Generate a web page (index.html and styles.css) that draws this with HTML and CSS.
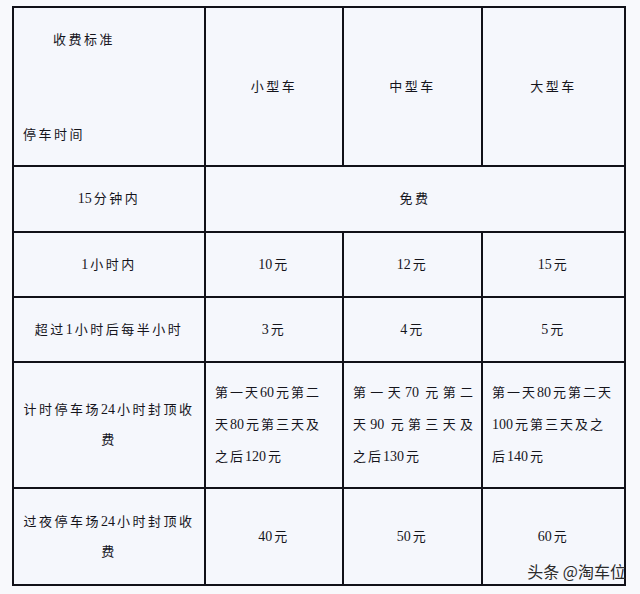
FILE: index.html
```html
<!DOCTYPE html>
<html lang="zh-CN">
<head>
<meta charset="utf-8">
<title>收费标准</title>
<link rel="stylesheet" href="styles.css">
</head>
<body>
<div class="page">
  <div class="grid">
    <div class="cell head-corner">
      <div class="hc-top">收费标准</div>
      <div class="hc-bottom">停车时间</div>
    </div>
    <div class="cell">小型车</div>
    <div class="cell">中型车</div>
    <div class="cell">大型车</div>

    <div class="cell"><span><span class="n">15</span>分钟内</span></div>
    <div class="cell span3">免费</div>

    <div class="cell"><span><span class="n">1</span>小时内</span></div>
    <div class="cell"><span><span class="n">10</span>元</span></div>
    <div class="cell"><span><span class="n">12</span>元</span></div>
    <div class="cell"><span><span class="n">15</span>元</span></div>

    <div class="cell"><span>超过<span class="n">1</span>小时后每半小时</span></div>
    <div class="cell"><span><span class="n">3</span>元</span></div>
    <div class="cell"><span><span class="n">4</span>元</span></div>
    <div class="cell"><span><span class="n">5</span>元</span></div>

    <div class="cell two-line"><div>计时停车场<span class="n">24</span>小时封顶收<br>费</div></div>
    <div class="cell multi">
      <div class="ln">第一天<span class="n">60</span>元第二</div>
      <div class="ln">天<span class="n">80</span>元第三天及</div>
      <div class="ln">之后<span class="n">120</span>元</div>
    </div>
    <div class="cell multi">
      <div class="ln just">第一天<span class="n">70</span>元第二</div>
      <div class="ln just">天<span class="n">90</span>元第三天及</div>
      <div class="ln">之后<span class="n">130</span>元</div>
    </div>
    <div class="cell multi">
      <div class="ln">第一天<span class="n">80</span>元第二天</div>
      <div class="ln"><span class="n">100</span>元第三天及之</div>
      <div class="ln">后<span class="n">140</span>元</div>
    </div>

    <div class="cell two-line"><div>过夜停车场<span class="n">24</span>小时封顶收<br>费</div></div>
    <div class="cell"><span><span class="n">40</span>元</span></div>
    <div class="cell"><span><span class="n">50</span>元</span></div>
    <div class="cell"><span><span class="n">60</span>元</span></div>
  </div>
  <div class="watermark">头条 @淘车位</div>
</div>
</body>
</html>
```

FILE: styles.css
```css
html, body {
  margin: 0;
  padding: 0;
  background: #f8f9fc;
}

.page {
  position: relative;
  width: 640px;
  height: 594px;
  padding: 6px 0 0 12px;
  box-sizing: border-box;
  font-family: "Liberation Serif", "Noto Sans CJK SC", serif;
  font-size: 13px;
  font-weight: 400;
  color: #15151c;
  letter-spacing: 2.5px;
}

.grid {
  display: grid;
  width: 614px;
  box-sizing: border-box;
  padding: 2px;
  gap: 2px;
  background: #111118;
  grid-template-columns: 190px 136px 137px 141px;
  grid-template-rows: 157px 64px 63px 63px 124px 95px;
}

.cell {
  background: #f5f7fc;
  display: flex;
  align-items: center;
  justify-content: center;
  text-align: center;
  line-height: 20px;
}

.n {
  font-size: 14px;
  letter-spacing: 0;
  margin-right: 2px;
}

.span3 {
  grid-column: 2 / 5;
}

.head-corner {
  flex-direction: column;
  align-items: stretch;
  justify-content: space-between;
  padding: 22px 0 20px;
  text-align: left;
}

.hc-top {
  padding-left: 39px;
}

.hc-bottom {
  padding-left: 9px;
}

.two-line {
  line-height: 30px;
  padding: 0 4px;
}

.multi {
  flex-direction: column;
  align-items: stretch;
  text-align: left;
  padding: 0 8px 0 9px;
  line-height: 32px;
  letter-spacing: 2px;
}

.ln.just {
  text-align: justify;
  text-align-last: justify;
  letter-spacing: 0;
}

.watermark {
  position: absolute;
  right: 14px;
  top: 562px;
  font-family: "Noto Sans CJK SC", sans-serif;
  font-size: 16px;
  font-weight: 400;
  line-height: 18px;
  letter-spacing: 0;
  color: #2b2b2b;
}
```
